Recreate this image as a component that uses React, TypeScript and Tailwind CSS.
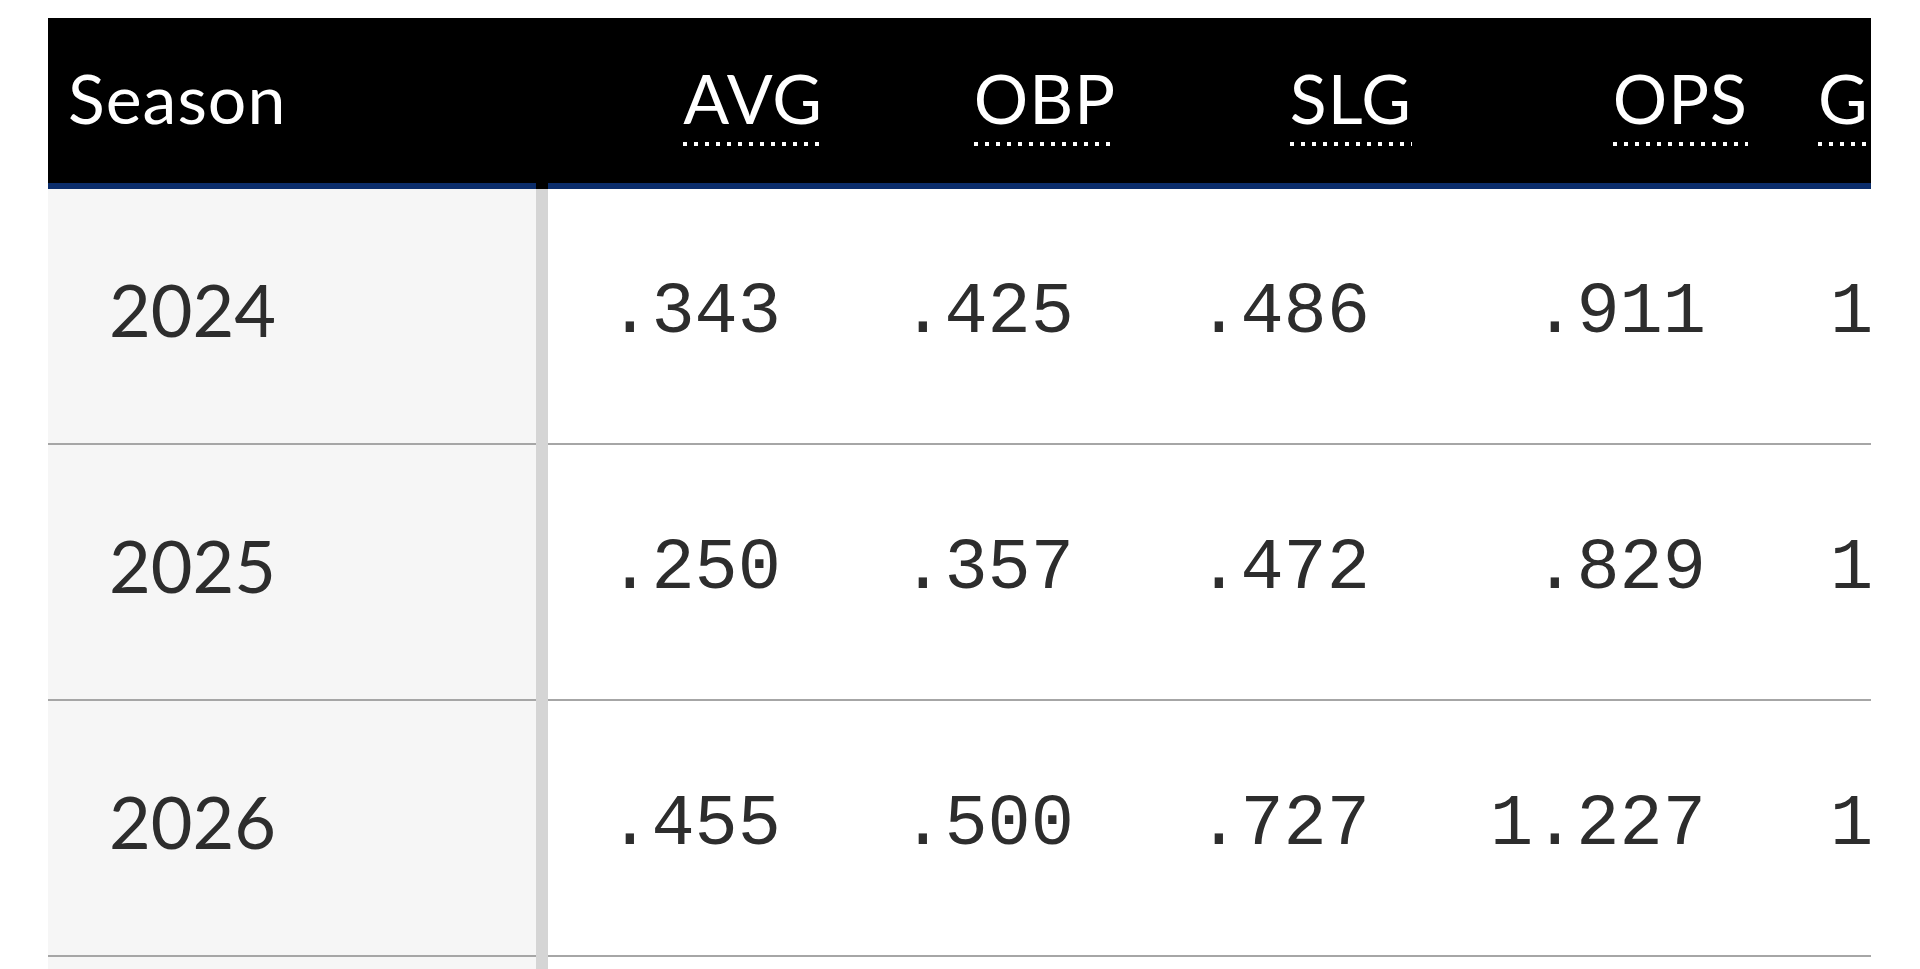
import React from 'react';

type Row = { season: string; avg: string; obp: string; slg: string; ops: string; g: string };

const rows: Row[] = [
    { season: '2024', avg: '.343', obp: '.425', slg: '.486', ops: '.911', g: '12' },
    { season: '2025', avg: '.250', obp: '.357', slg: '.472', ops: '.829', g: '11' },
    { season: '2026', avg: '.455', obp: '.500', slg: '.727', ops: '1.227', g: '11' },
    { season: '2027', avg: '.312', obp: '.400', slg: '.515', ops: '.915', g: '10' },
];

const statCols = [
    { key: 'avg', label: 'AVG', width: 'w-[291px]' },
    { key: 'obp', label: 'OBP', width: 'w-[293px]' },
    { key: 'slg', label: 'SLG', width: 'w-[296px]' },
    { key: 'ops', label: 'OPS', width: 'w-[336px]' },
] as const;

const Dotted: React.FC = () => (
    <div className="mt-[12px] h-[4px] w-full bg-[linear-gradient(to_right,#ffffff_4px,transparent_4px)] bg-[length:11px_4px] bg-repeat-x" />
);

const HeaderLabel: React.FC<{ label: string; wide?: boolean }> = ({ label, wide }) => (
    <div className={`flex flex-col ${wide ? 'w-[120px]' : ''}`}>
        <span className="leading-[64px]">{label}</span>
        <Dotted />
    </div>
);

const App: React.FC = () => {
    return (
        <div className="h-[969px] overflow-hidden bg-white pt-[18px] pl-[48px]">
            <div className="w-[1823px] overflow-hidden">
                {/* Header */}
                <div className="flex bg-black text-white text-[68px] leading-[64px] tracking-[1px] font-['Lato',sans-serif] h-[171px]">
                    <div className="w-[488px] shrink-0 flex items-start pl-[20px] pt-[48px] border-b-[6px] border-[#0b2d6b]">
                        <span className="leading-[64px]">Season</span>
                    </div>
                    <div className="w-[12px] shrink-0 bg-black" />
                    {statCols.map((c) => (
                        <div key={c.key} className={`${c.width} shrink-0 flex items-start justify-end pr-[16px] pt-[48px] border-b-[6px] border-[#0b2d6b]`}>
                            <HeaderLabel label={c.label} />
                        </div>
                    ))}
                    <div className="w-[300px] shrink-0 flex items-start pl-[54px] pt-[48px] border-b-[6px] border-[#0b2d6b]">
                        <HeaderLabel label="G" wide />
                    </div>
                </div>

                {/* Body */}
                {rows.map((r) => (
                    <div key={r.season} className="flex h-[256px] text-[#2d2d2d]">
                        <div className="w-[488px] shrink-0 bg-[#f6f6f6] border-b-2 border-[#a6a6a6] pl-[61px] pt-[84px] text-[72px] leading-[72px] font-['Lato',sans-serif]">
                            {r.season}
                        </div>
                        <div className="w-[12px] shrink-0 bg-[#d5d5d5]" />
                        {statCols.map((c) => (
                            <div key={c.key} className={`${c.width} shrink-0 flex justify-end pr-[58px] pt-[88px] border-b-2 border-[#a6a6a6] text-[72px] leading-[72px] font-['Liberation_Mono',monospace]`}>
                                {r[c.key]}
                            </div>
                        ))}
                        <div className="w-[300px] shrink-0 pl-[66px] pt-[88px] border-b-2 border-[#a6a6a6] text-[72px] leading-[72px] font-['Liberation_Mono',monospace]">
                            {r.g}
                        </div>
                    </div>
                ))}
            </div>
        </div>
    );
};

export default App;
